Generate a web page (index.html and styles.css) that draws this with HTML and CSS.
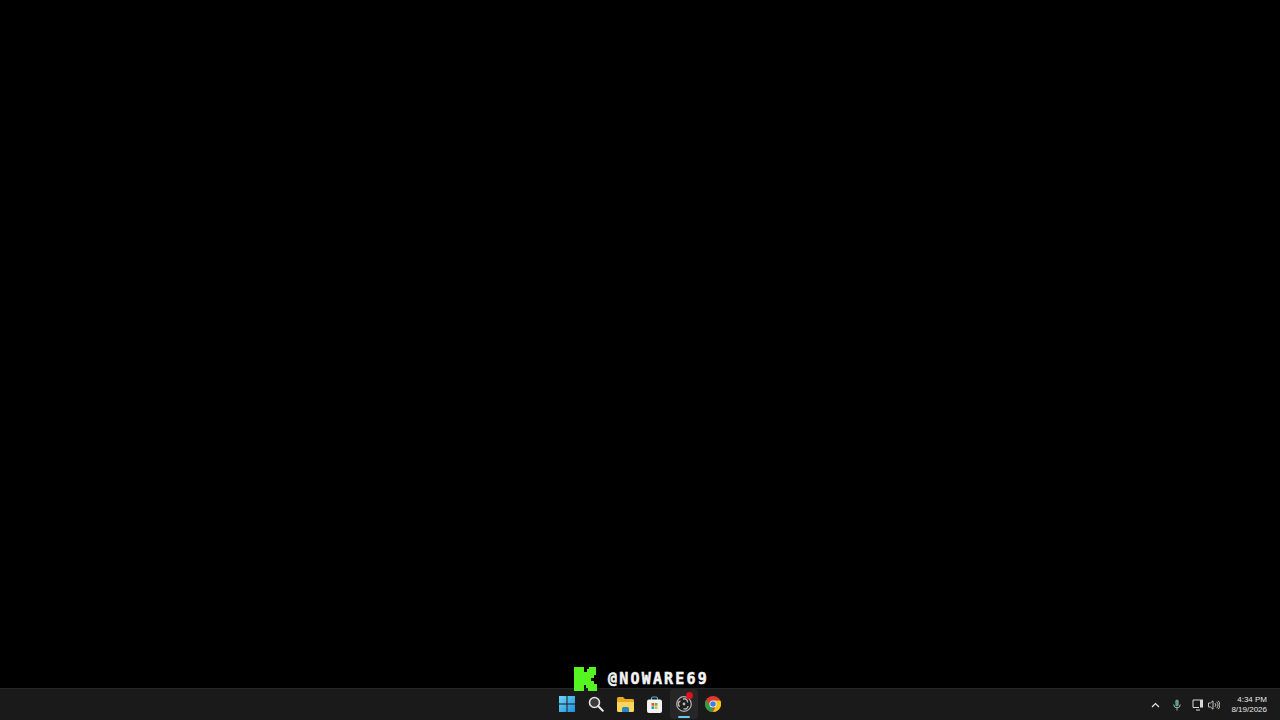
FILE: index.html
```html
<!DOCTYPE html>
<html>
<head>
    <title>Desktop</title>
    <link rel="stylesheet" href="styles.css">
</head>
<body>
    <div class="desktop">
        <div class="handle">
            <svg class="kick-logo" width="23" height="24" viewBox="0 0 23 24">
                <path fill="#55f522" d="M0 0H10V5H13V2H15V0H22V8H20V11H17V14H20V17H23V24H14V21H12V18H10V24H0Z"/>
            </svg>
            <span class="handle-name">@NOWARE69</span>
        </div>
    </div>

    <div class="taskbar">
        <div class="task-icons">
            <div class="task-icon">
                <svg width="16" height="16" viewBox="0 0 16 16">
                    <defs>
                        <linearGradient id="winBlue" x1="0" y1="0" x2="1" y2="1">
                            <stop offset="0" stop-color="#6fd6f7"/>
                            <stop offset="1" stop-color="#1d8fdc"/>
                        </linearGradient>
                    </defs>
                    <path fill="url(#winBlue)" d="M0 0H7.500V7.500H0ZM8.500 0H16V7.500H8.500ZM0 8.500H7.500V16H0ZM8.500 8.500H16V16H8.500Z"/>
                </svg>
            </div>
            <div class="task-icon">
                <svg width="16" height="16" viewBox="0 0 16 16">
                    <circle cx="6.500" cy="6.500" r="5" fill="#3c3c3c" stroke="#e4e4e4" stroke-width="1.600"/>
                    <path d="M10.300 10.300L14.800 14.800" stroke="#e8e8e8" stroke-width="2" stroke-linecap="round"/>
                </svg>
            </div>
            <div class="task-icon">
                <svg width="17" height="15" viewBox="0 0 17 15">
                    <path fill="#e8a920" d="M0 1.500Q0 0 1.500 0H6L8 2H15.500Q17 2 17 3.500V6H0Z"/>
                    <path fill="#fbd45c" d="M0 5H17V13.500Q17 15 15.500 15H1.500Q0 15 0 13.500Z"/>
                    <path fill="#2a86c8" d="M5 15V11.500Q5 10 6.500 10H10.500Q12 10 12 11.500V15Z"/>
                </svg>
            </div>
            <div class="task-icon">
                <svg width="15" height="17" viewBox="0 0 15 17">
                    <path d="M4.500 4V2.500Q4.500 1 6 1H9Q10.500 1 10.500 2.500V4" fill="none" stroke="#4fb3d9" stroke-width="1.200"/>
                    <rect x="0" y="3.500" width="15" height="13.500" rx="2" fill="#f2f2f2"/>
                    <rect x="4.500" y="7" width="2.700" height="2.700" fill="#e8512a"/>
                    <rect x="7.800" y="7" width="2.700" height="2.700" fill="#6fb52c"/>
                    <rect x="4.500" y="10.300" width="2.700" height="2.700" fill="#1f9ae0"/>
                    <rect x="7.800" y="10.300" width="2.700" height="2.700" fill="#f5b81c"/>
                </svg>
            </div>
            <div class="task-icon task-icon-active">
                <svg width="16" height="16" viewBox="0 0 16 16">
                    <circle cx="8" cy="8" r="7.300" fill="#1e1e1e" stroke="#b4b4b4" stroke-width="1.200"/>
                    <circle cx="8" cy="8" r="1.400" fill="#b4b4b4"/>
                    <path d="M7 3.300A3 3 0 0 1 11.500 6.500M12 10A3 3 0 0 1 7.500 12.500M3.800 10.500A3 3 0 0 1 4.500 5" fill="none" stroke="#b4b4b4" stroke-width="1.400"/>
                </svg>
                <span class="badge"></span>
                <span class="active-bar"></span>
            </div>
            <div class="task-icon">
                <svg width="16" height="16" viewBox="0 0 16 16">
                    <circle cx="8" cy="8" r="8" fill="#e0392b"/>
                    <path fill="#f7c516" d="M8 4.500H15.300A8 8 0 0 1 8 16L11 9.500A3.500 3.500 0 0 0 8 4.500Z"/>
                    <path fill="#2f9e47" d="M1.200 3.800L5 10A3.500 3.500 0 0 0 8 11.500L8 16A8 8 0 0 1 1.200 3.800Z"/>
                    <circle cx="8" cy="8" r="3.600" fill="#fff"/>
                    <circle cx="8" cy="8" r="2.800" fill="#3b82e0"/>
                </svg>
            </div>
        </div>

        <div class="tray">
            <svg class="tray-chevron" width="9" height="6" viewBox="0 0 9 6">
                <path d="M1 5L4.500 1.500L8 5" fill="none" stroke="#e8e8e8" stroke-width="1.200"/>
            </svg>
            <svg class="tray-mic" width="8" height="12" viewBox="0 0 8 12">
                <rect x="2.300" y="0.500" width="3.400" height="7" rx="1.700" fill="#5f9c93"/>
                <path d="M0.700 5.500A3.300 3.300 0 0 0 7.300 5.500M4 9V11.500" fill="none" stroke="#9fb5b2" stroke-width="1"/>
            </svg>
            <svg class="tray-net" width="12" height="12" viewBox="0 0 12 12">
                <path d="M8 1H1V8.500H7M4 11H8" fill="none" stroke="#d8d8d8" stroke-width="1"/>
                <rect x="8" y="0.500" width="3" height="8" fill="#d8d8d8"/>
            </svg>
            <svg class="tray-vol" width="12" height="10" viewBox="0 0 12 10">
                <path d="M0.500 3H2.500L5 0.800V9.200L2.500 7H0.500Z" fill="none" stroke="#d0d0d0" stroke-width="0.900"/>
                <path d="M7 3.200A2.500 2.500 0 0 1 7 6.800M8.700 1.800A4.500 4.500 0 0 1 8.700 8.200M10.200 0.800A6 6 0 0 1 10.200 9.200" fill="none" stroke="#d0d0d0" stroke-width="0.900"/>
            </svg>
            <div class="clock">
                <div>4:34 PM</div>
                <div>8/19/2026</div>
            </div>
        </div>
    </div>
</body>
</html>
```

FILE: styles.css
```css
html, body {
    height: 100%;
}

body {
    margin: 0;
    background-color: #000;
    font-family: "Liberation Sans", Arial, sans-serif;
    display: flex;
    flex-direction: column;
    overflow: hidden;
}

.desktop {
    flex: 1;
    display: flex;
    flex-direction: column;
    align-items: center;
    justify-content: flex-end;
}

.handle {
    display: flex;
    align-items: center;
    gap: 11px;
    margin-left: 1px;
    margin-bottom: -3px;
    position: relative;
    z-index: 1;
}

.kick-logo {
    display: block;
}

.handle-name {
    font-family: "DejaVu Sans Mono", monospace;
    font-weight: bold;
    font-size: 15px;
    letter-spacing: 2.200px;
    -webkit-text-stroke: 0.500px #f4f4f4;
    color: #f4f4f4;
    margin-right: -2px;
    margin-bottom: 1px;
}

.taskbar {
    height: 32px;
    flex-shrink: 0;
    background-color: #1a1a1a;
    border-top: 1px solid #262626;
    box-sizing: border-box;
    display: grid;
    grid-template-columns: 1fr auto 1fr;
    align-items: center;
}

.task-icons {
    grid-column: 2;
    display: flex;
    align-items: center;
    gap: 1px;
    padding-bottom: 1px;
}

.task-icon {
    width: 28.300px;
    height: 30px;
    display: flex;
    justify-content: center;
    align-items: center;
    position: relative;
    border-radius: 3px;
}

.task-icon-active {
    background-color: #262626;
}

.badge {
    position: absolute;
    top: 3px;
    right: 5px;
    width: 7px;
    height: 7px;
    border-radius: 50%;
    background-color: #e0101c;
}

.active-bar {
    position: absolute;
    bottom: 1px;
    left: 8px;
    width: 12px;
    height: 2px;
    border-radius: 1px;
    background-color: #6cc5ef;
}

.tray {
    grid-column: 3;
    display: flex;
    align-items: center;
    justify-content: flex-end;
    padding-right: 13px;
}

.tray-chevron {
    margin-right: 13px;
}

.tray-mic {
    margin-right: 11px;
}

.tray-net {
    margin-right: 4px;
}

.tray-vol {
    margin-right: 11px;
}

.clock {
    font-size: 8px;
    line-height: 10px;
    color: #e6e6e6;
    text-align: right;
}
```
